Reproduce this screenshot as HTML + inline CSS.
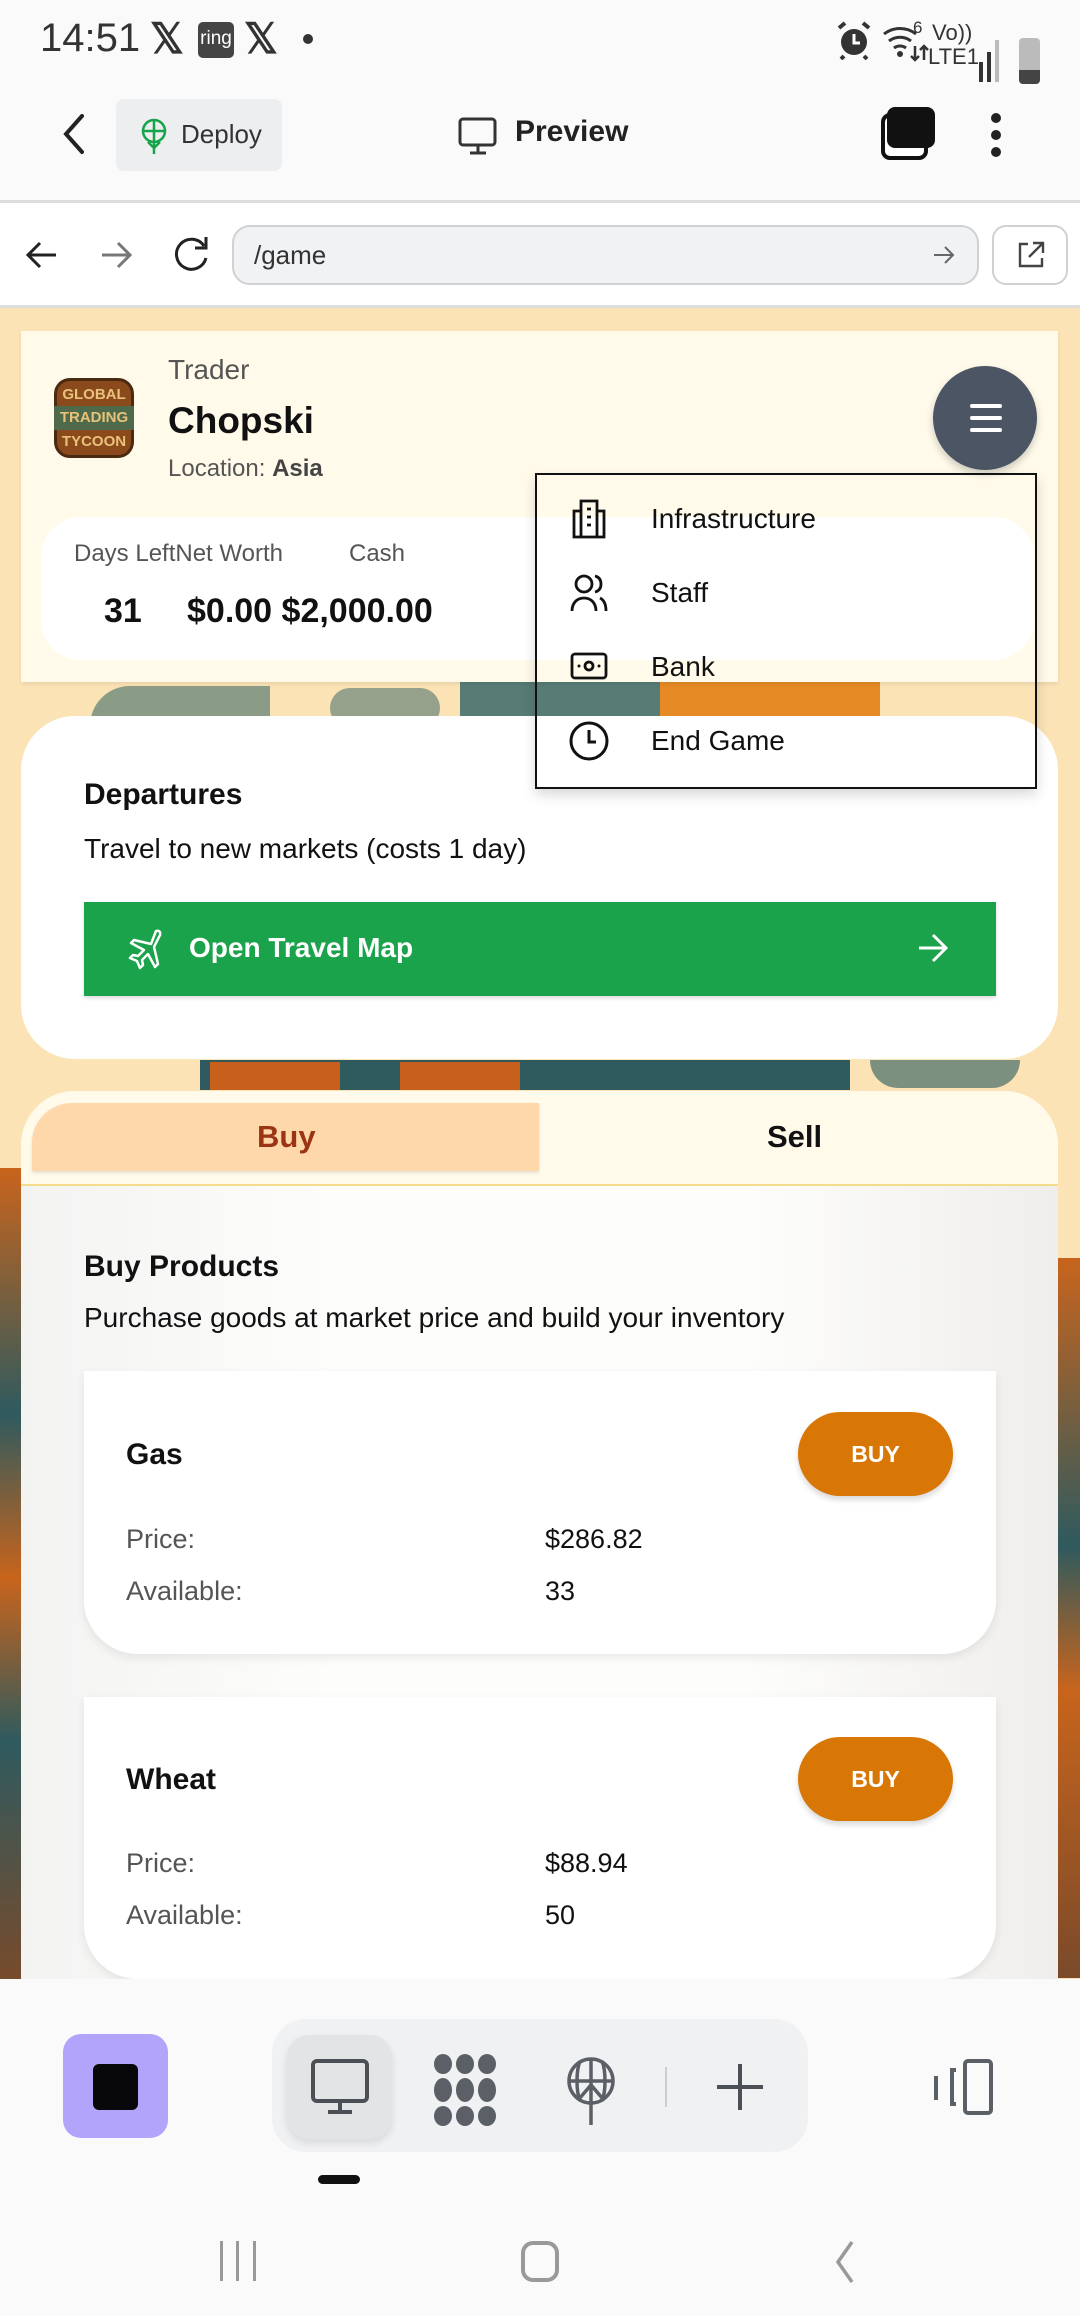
<!DOCTYPE html>
<html><head><meta charset="utf-8">
<style>
*{box-sizing:border-box;margin:0;padding:0}
body{width:1080px;height:2316px;position:relative;overflow:hidden;font-family:"Liberation Sans",sans-serif;background:#fafafa;color:#000}
.a{position:absolute}
.t{position:absolute;white-space:nowrap}
</style></head><body>
<!-- status bar -->
<div class="a" style="left:0;top:0;width:1080px;height:201px;background:#fafafa"></div>
<div class="t" style="left:40px;top:16px;font-size:40px;color:#333">14:51</div>
<div class="t" style="left:150px;top:14px;font-size:42px;font-weight:bold;color:#333">𝕏</div>
<div class="a" style="left:198px;top:22px;width:36px;height:36px;background:#444;border-radius:5px;color:#fff;font-size:19px;text-align:center;line-height:34px">ring</div>
<div class="t" style="left:244px;top:14px;font-size:42px;font-weight:bold;color:#333">𝕏</div>
<div class="a" style="left:303px;top:34px;width:10px;height:10px;border-radius:50%;background:#333"></div>
<svg class="a" style="left:836px;top:20px" width="36" height="40" viewBox="0 0 36 40"><circle cx="18" cy="22" r="13" fill="#333"/><path d="M18 14v9h6" stroke="#fff" stroke-width="3" fill="none"/><path d="M3 8l6-5M33 8l-6-5M8 36l-3 3M28 36l3 3" stroke="#333" stroke-width="4"/></svg>
<svg class="a" style="left:882px;top:22px" width="48" height="40" viewBox="0 0 48 40"><path d="M2 12a26 26 0 0 1 32 0M7 19a18 18 0 0 1 22 0M12 26a10 10 0 0 1 12 0" fill="none" stroke="#333" stroke-width="3"/><circle cx="18" cy="32" r="3" fill="#333"/><path d="M33 24v14M29 34l4 4 4-4M42 38V24M38 28l4-4 4 4" stroke="#333" stroke-width="2.5" fill="none"/></svg>
<div class="t" style="left:913px;top:18px;font-size:17px;color:#333">6</div>
<div class="t" style="left:932px;top:20px;font-size:22px;color:#333">Vo))</div>
<div class="t" style="left:928px;top:44px;font-size:22px;color:#333">LTE1</div>
<div class="a" style="left:979px;top:62px;width:4px;height:20px;background:#333"></div>
<div class="a" style="left:987px;top:52px;width:4px;height:30px;background:#333"></div>
<div class="a" style="left:995px;top:40px;width:4px;height:42px;background:#bbb"></div>
<div class="a" style="left:1019px;top:38px;width:21px;height:46px;background:#bbb;border-radius:4px"></div>
<div class="a" style="left:1019px;top:70px;width:21px;height:14px;background:#444;border-radius:0 0 4px 4px"></div>

<!-- app bar -->
<svg class="a" style="left:58px;top:110px" width="30" height="48" viewBox="0 0 30 48"><path d="M24 6 L8 24 L24 42" fill="none" stroke="#222" stroke-width="4" stroke-linecap="round"/></svg>
<div class="a" style="left:116px;top:99px;width:166px;height:72px;background:#eceef0;border-radius:8px"></div>
<svg class="a" style="left:140px;top:118px" width="28" height="38" viewBox="0 0 28 38"><circle cx="14" cy="13" r="11" fill="none" stroke="#16a34a" stroke-width="2.5"/><path d="M3 13h22M14 2v34M8 24l6 6 6-6" fill="none" stroke="#16a34a" stroke-width="2.5"/></svg>
<div class="t" style="left:181px;top:119px;font-size:26px;color:#333">Deploy</div>
<svg class="a" style="left:458px;top:116px" width="40" height="40" viewBox="0 0 40 40"><rect x="2" y="3" width="35" height="26" rx="3" fill="none" stroke="#333" stroke-width="3"/><path d="M20 29v7M12 37h16" stroke="#333" stroke-width="3"/></svg>
<div class="t" style="left:515px;top:115px;font-size:30px;font-weight:bold;color:#222">Preview</div>
<div class="a" style="left:881px;top:113px;width:47px;height:47px;border:4px solid #111;border-radius:9px;background:#fff"></div>
<div class="a" style="left:887px;top:107px;width:48px;height:41px;background:#111;border-radius:8px"></div>
<div class="a" style="left:991px;top:113px;width:10px;height:10px;border-radius:50%;background:#222"></div>
<div class="a" style="left:991px;top:130px;width:10px;height:10px;border-radius:50%;background:#222"></div>
<div class="a" style="left:991px;top:147px;width:10px;height:10px;border-radius:50%;background:#222"></div>
<div class="a" style="left:0;top:200px;width:1080px;height:3px;background:#ddd"></div>

<!-- url bar -->
<div class="a" style="left:0;top:203px;width:1080px;height:104px;background:#fff"></div>
<svg class="a" style="left:24px;top:237px" width="36" height="36" viewBox="0 0 36 36"><path d="M32 18H6M16 6L4 18l12 12" fill="none" stroke="#222" stroke-width="3"/></svg>
<svg class="a" style="left:98px;top:237px" width="36" height="36" viewBox="0 0 36 36"><path d="M4 18h26M20 6l12 12-12 12" fill="none" stroke="#777" stroke-width="3"/></svg>
<svg class="a" style="left:170px;top:234px" width="42" height="42" viewBox="0 0 42 42"><path d="M34 12A15 15 0 1 0 36 24" fill="none" stroke="#222" stroke-width="3"/><path d="M36 3v11H25" fill="none" stroke="#222" stroke-width="3"/></svg>
<div class="a" style="left:232px;top:225px;width:747px;height:60px;background:#f1f2f4;border:2px solid #cfd1d4;border-radius:18px"></div>
<div class="t" style="left:254px;top:240px;font-size:26px;color:#333">/game</div>
<svg class="a" style="left:932px;top:243px" width="24" height="24" viewBox="0 0 24 24"><path d="M2 12h19M13 4l8 8-8 8" fill="none" stroke="#666" stroke-width="2"/></svg>
<div class="a" style="left:992px;top:225px;width:76px;height:60px;background:#fff;border:2px solid #cfd1d4;border-radius:14px"></div>
<svg class="a" style="left:1016px;top:240px" width="30" height="30" viewBox="0 0 30 30"><path d="M12 4H4v22h22v-8M17 3h10v10M27 3L13 17" fill="none" stroke="#444" stroke-width="2.4"/></svg>
<div class="a" style="left:0;top:305px;width:1080px;height:3px;background:#ddd"></div>

<!-- content background -->
<div class="a" style="left:0;top:308px;width:1080px;height:1671px;background:#fbe3b5;overflow:hidden">
  <div class="a" style="left:90px;top:378px;width:180px;height:40px;background:#6f8a7a;border-radius:40px 0 0 0;opacity:.8"></div>
  <div class="a" style="left:330px;top:380px;width:110px;height:40px;background:#7c9080;border-radius:20px;opacity:.8"></div>
  <div class="a" style="left:460px;top:374px;width:420px;height:46px;background:#3a6a6a;opacity:.85"></div>
  <div class="a" style="left:660px;top:374px;width:220px;height:46px;background:#e58a25"></div>
  <div class="a" style="left:200px;top:752px;width:650px;height:30px;background:#2f5a5e"></div>
  <div class="a" style="left:210px;top:754px;width:130px;height:28px;background:#c85f1c"></div>
  <div class="a" style="left:400px;top:754px;width:120px;height:28px;background:#c85f1c"></div>
  <div class="a" style="left:870px;top:752px;width:150px;height:28px;background:#7c9080;border-radius:0 0 30px 30px"></div>
  <div class="a" style="left:0;top:860px;width:22px;height:820px;background:linear-gradient(#c8641c,#2f5a5e 30%,#c8641c 50%,#2f5a5e 70%,#7a4a2a)"></div>
  <div class="a" style="left:1058px;top:950px;width:22px;height:720px;background:linear-gradient(#c8641c,#2f5a5e 40%,#c8641c 60%,#7a4a2a)"></div>
</div>

<!-- header card -->
<div class="a" style="left:21px;top:331px;width:1037px;height:351px;background:#fffaea;box-shadow:0 2px 4px rgba(0,0,0,.08)"></div>
<div class="a" style="left:54px;top:378px;width:80px;height:80px;border-radius:16px;background:#8b4a1c;border:3px solid #4a2a10"></div>
<div class="t" style="left:58px;top:383px;width:72px;text-align:center;font-size:15px;line-height:24px;color:#e8c27a;font-weight:bold">GLOBAL</div>
<div class="a" style="left:54px;top:406px;width:80px;height:24px;background:#4e6a4a"></div>
<div class="t" style="left:56px;top:406px;width:76px;text-align:center;font-size:15px;line-height:24px;color:#e8c27a;font-weight:bold">TRADING</div>
<div class="t" style="left:58px;top:430px;width:72px;text-align:center;font-size:15px;line-height:24px;color:#e8c27a;font-weight:bold">TYCOON</div>
<div class="t" style="left:168px;top:354px;font-size:28px;color:#555">Trader</div>
<div class="t" style="left:168px;top:400px;font-size:37px;font-weight:bold;color:#111">Chopski</div>
<div class="t" style="left:168px;top:455px;font-size:24px;color:#555">Location: <b style="color:#444">Asia</b></div>
<div class="a" style="left:933px;top:366px;width:104px;height:104px;border-radius:50%;background:#4b5563;box-shadow:0 4px 8px rgba(0,0,0,.2)"></div>
<div class="a" style="left:970px;top:404px;width:32px;height:4px;background:#fff;border-radius:2px"></div>
<div class="a" style="left:970px;top:416px;width:32px;height:4px;background:#fff;border-radius:2px"></div>
<div class="a" style="left:970px;top:428px;width:32px;height:4px;background:#fff;border-radius:2px"></div>
<div class="a" style="left:41px;top:517px;width:993px;height:143px;background:#fff;border-radius:40px"></div>
<div class="t" style="left:74px;top:540px;font-size:24px;color:#555">Days LeftNet Worth</div>
<div class="t" style="left:349px;top:540px;font-size:24px;color:#555">Cash</div>
<div class="t" style="left:104px;top:592px;font-size:34px;font-weight:bold;color:#111">31</div>
<div class="t" style="left:187px;top:592px;font-size:34px;font-weight:bold;color:#111">$0.00 $2,000.00</div>

<!-- departures card -->
<div class="a" style="left:21px;top:716px;width:1037px;height:343px;background:#fff;border-radius:54px"></div>
<div class="t" style="left:84px;top:778px;font-size:30px;font-weight:bold;color:#111">Departures</div>
<div class="t" style="left:84px;top:833px;font-size:28px;color:#111">Travel to new markets (costs 1 day)</div>
<div class="a" style="left:84px;top:902px;width:912px;height:94px;background:#1aa34a;box-shadow:0 2px 4px rgba(0,0,0,.15)"></div>
<svg class="a" style="left:126px;top:928px" width="38" height="42" viewBox="0 0 38 42"><path d="M30 3c3-1 5 1 4 4l-6 12 4 17-3 3-7-13-6 6 1 5-3 3-3-7-7-3 3-3 5 1 6-6-13-7 3-3 17 4z" fill="none" stroke="#fff" stroke-width="2.5" stroke-linejoin="round"/></svg>
<div class="t" style="left:189px;top:932px;font-size:28px;font-weight:bold;color:#fff">Open Travel Map</div>
<svg class="a" style="left:917px;top:930px" width="32" height="36" viewBox="0 0 32 36"><path d="M2 18h26M16 5l13 13-13 13" fill="none" stroke="#fff" stroke-width="3"/></svg>

<!-- dropdown -->
<div class="a" style="left:535px;top:473px;width:502px;height:316px;border:2px solid #111;box-shadow:0 6px 12px rgba(0,0,0,.15)"></div>
<svg class="a" style="left:570px;top:497px" width="38" height="42" viewBox="0 0 38 42"><path d="M11 40V4h16v36M11 14H4v26h30V14h-7M17 12h4M17 20h4M17 28h4M5 40h28" fill="none" stroke="#111" stroke-width="2.8"/></svg>
<div class="t" style="left:651px;top:503px;font-size:28px;color:#111">Infrastructure</div>
<svg class="a" style="left:570px;top:573px" width="38" height="40" viewBox="0 0 38 40"><circle cx="14" cy="11" r="8" fill="none" stroke="#111" stroke-width="2.8"/><path d="M2 38c0-8 5-13 12-13s12 5 12 13M25 3c4 1 6 4 6 8s-2 7-6 8M30 25c4 2 6 7 6 13" fill="none" stroke="#111" stroke-width="2.8"/></svg>
<div class="t" style="left:651px;top:577px;font-size:28px;color:#111">Staff</div>
<svg class="a" style="left:570px;top:651px" width="38" height="30" viewBox="0 0 38 30"><rect x="2" y="3" width="34" height="24" rx="3" fill="none" stroke="#111" stroke-width="2.8"/><circle cx="19" cy="15" r="4" fill="none" stroke="#111" stroke-width="2.8"/><circle cx="9" cy="15" r="1.5" fill="#111"/><circle cx="29" cy="15" r="1.5" fill="#111"/></svg>
<div class="t" style="left:651px;top:651px;font-size:28px;color:#111">Bank</div>
<svg class="a" style="left:568px;top:720px" width="42" height="42" viewBox="0 0 42 42"><circle cx="21" cy="21" r="18" fill="none" stroke="#111" stroke-width="3"/><path d="M21 10v12h7" fill="none" stroke="#111" stroke-width="3"/></svg>
<div class="t" style="left:651px;top:725px;font-size:28px;color:#111">End Game</div>

<!-- tabs panel -->
<div class="a" style="left:21px;top:1091px;width:1037px;height:888px;background:rgba(255,255,255,.93);border-radius:54px 54px 0 0;overflow:hidden">
  <div class="a" style="left:0;top:0;width:1037px;height:94px;background:#fffaea"></div>
  <div class="a" style="left:0;top:93px;width:1037px;height:2px;background:#f5dc8a"></div>
  <div class="a" style="left:0;top:95px;width:1037px;height:793px;background:#f6f6f5"></div>
  <div class="a" style="left:0;top:95px;width:1037px;height:793px;background:linear-gradient(90deg,#f3f3f2,#fdfdfc 30%,#fdfdfc 70%,#f0eeec)"></div>
</div>
<div class="a" style="left:32px;top:1103px;width:507px;height:68px;background:#fed7aa;border-radius:40px 0 0 0;box-shadow:0 2px 3px rgba(0,0,0,.1)"></div>
<div class="t" style="left:257px;top:1119px;font-size:31px;font-weight:bold;color:#9a3412">Buy</div>
<div class="t" style="left:767px;top:1119px;font-size:31px;font-weight:bold;color:#111">Sell</div>
<div class="t" style="left:84px;top:1250px;font-size:30px;font-weight:bold;color:#111">Buy Products</div>
<div class="t" style="left:84px;top:1302px;font-size:28px;color:#111">Purchase goods at market price and build your inventory</div>

<!-- Gas card -->
<div class="a" style="left:84px;top:1371px;width:912px;height:283px;background:#fff;border-radius:0 0 54px 54px;box-shadow:0 4px 10px rgba(0,0,0,.08)"></div>
<div class="t" style="left:126px;top:1438px;font-size:30px;font-weight:bold;color:#111">Gas</div>
<div class="a" style="left:798px;top:1412px;width:155px;height:84px;border-radius:42px;background:#d97706;box-shadow:0 4px 6px rgba(0,0,0,.15)"></div>
<div class="t" style="left:798px;top:1441px;width:155px;text-align:center;font-size:23px;font-weight:bold;color:#fff">BUY</div>
<div class="t" style="left:126px;top:1524px;font-size:27px;color:#555">Price:</div>
<div class="t" style="left:545px;top:1524px;font-size:27px;color:#111">$286.82</div>
<div class="t" style="left:126px;top:1576px;font-size:27px;color:#555">Available:</div>
<div class="t" style="left:545px;top:1576px;font-size:27px;color:#111">33</div>

<!-- Wheat card -->
<div class="a" style="left:84px;top:1697px;width:912px;height:282px;background:#fff;border-radius:0 0 54px 54px;box-shadow:0 4px 10px rgba(0,0,0,.08)"></div>
<div class="t" style="left:126px;top:1763px;font-size:30px;font-weight:bold;color:#111">Wheat</div>
<div class="a" style="left:798px;top:1737px;width:155px;height:84px;border-radius:42px;background:#d97706;box-shadow:0 4px 6px rgba(0,0,0,.15)"></div>
<div class="t" style="left:798px;top:1766px;width:155px;text-align:center;font-size:23px;font-weight:bold;color:#fff">BUY</div>
<div class="t" style="left:126px;top:1848px;font-size:27px;color:#555">Price:</div>
<div class="t" style="left:545px;top:1848px;font-size:27px;color:#111">$88.94</div>
<div class="t" style="left:126px;top:1900px;font-size:27px;color:#555">Available:</div>
<div class="t" style="left:545px;top:1900px;font-size:27px;color:#111">50</div>

<!-- bottom bar -->
<div class="a" style="left:0;top:1979px;width:1080px;height:337px;background:#fafafa"></div>
<div class="a" style="left:63px;top:2034px;width:105px;height:104px;border-radius:18px;background:#b3a4fb"></div>
<div class="a" style="left:93px;top:2064px;width:45px;height:46px;border-radius:6px;background:#08080a"></div>
<div class="a" style="left:272px;top:2019px;width:536px;height:133px;border-radius:34px;background:#f0f1f3"></div>
<div class="a" style="left:287px;top:2035px;width:105px;height:104px;border-radius:22px;background:#e3e4e6;box-shadow:0 4px 8px rgba(0,0,0,.1)"></div>
<svg class="a" style="left:310px;top:2058px" width="60" height="60" viewBox="0 0 60 60"><rect x="3" y="3" width="54" height="40" rx="4" fill="none" stroke="#4b4f56" stroke-width="4"/><path d="M30 43v10M18 54h24" stroke="#4b4f56" stroke-width="4"/></svg>
<svg class="a" style="left:432px;top:2054px" width="66" height="72" viewBox="0 0 66 72"><g fill="#5b5f66"><ellipse cx="11" cy="10" rx="9" ry="10"/><ellipse cx="33" cy="10" rx="9" ry="10"/><ellipse cx="55" cy="10" rx="9" ry="10"/><ellipse cx="11" cy="36" rx="9" ry="12"/><ellipse cx="33" cy="36" rx="9" ry="12"/><ellipse cx="55" cy="36" rx="9" ry="12"/><ellipse cx="11" cy="62" rx="9" ry="10"/><ellipse cx="33" cy="62" rx="9" ry="10"/><ellipse cx="55" cy="62" rx="9" ry="10"/></g></svg>
<svg class="a" style="left:565px;top:2055px" width="52" height="72" viewBox="0 0 52 72"><circle cx="26" cy="26" r="22" fill="none" stroke="#5b5f66" stroke-width="3.5"/><path d="M4 26h44M26 4v66M15 6c-4 10-4 30 0 40M37 6c4 10 4 30 0 40M14 44l12-14 12 14" fill="none" stroke="#5b5f66" stroke-width="3.5"/></svg>
<div class="a" style="left:665px;top:2067px;width:2px;height:40px;background:#ccc"></div>
<svg class="a" style="left:715px;top:2062px" width="50" height="50" viewBox="0 0 50 50"><path d="M25 2v46M2 25h46" stroke="#4b4f56" stroke-width="4"/></svg>
<svg class="a" style="left:932px;top:2058px" width="64" height="60" viewBox="0 0 64 60"><rect x="33" y="3" width="26" height="52" rx="3" fill="none" stroke="#5b5f66" stroke-width="4"/><path d="M4 18v24" fill="none" stroke="#5b5f66" stroke-width="4"/><path d="M24 12h-4v34h4" fill="none" stroke="#5b5f66" stroke-width="4"/></svg>
<div class="a" style="left:318px;top:2175px;width:42px;height:9px;border-radius:5px;background:#111"></div>
<div class="a" style="left:220px;top:2241px;width:3px;height:40px;background:#999"></div>
<div class="a" style="left:236px;top:2241px;width:3px;height:40px;background:#999"></div>
<div class="a" style="left:253px;top:2241px;width:3px;height:40px;background:#999"></div>
<div class="a" style="left:521px;top:2241px;width:38px;height:41px;border:4px solid #999;border-radius:12px"></div>
<svg class="a" style="left:828px;top:2238px" width="30" height="48" viewBox="0 0 30 48"><path d="M24 4L10 24l14 20" fill="none" stroke="#999" stroke-width="3.5"/></svg>
</body></html>
